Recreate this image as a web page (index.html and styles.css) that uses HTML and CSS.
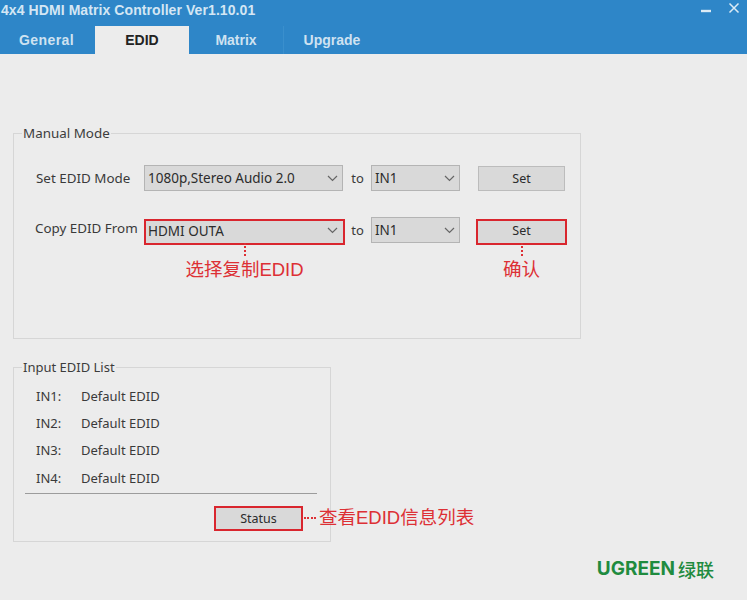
FILE: index.html
```html
<!DOCTYPE html>
<html lang="en">
<head>
<meta charset="utf-8">
<title>4x4 HDMI Matrix Controller</title>
<link rel="stylesheet" href="styles.css">
</head>
<body>
<div class="window">
  <header class="head">
    <div class="titlebar">
      <span class="title">4x4 HDMI Matrix Controller Ver1.10.01</span>
      <span class="winbtns">
        <svg class="win-min" width="10" height="12" viewBox="0 0 10 12"><path d="M0 9h10" stroke="#dcebf5" stroke-width="2.4"/></svg>
        <svg class="win-close" width="12" height="12" viewBox="0 0 12 12"><path d="M1.5 1.5l9 9M10.5 1.5l-9 9" stroke="#dcebf5" stroke-width="1.5"/></svg>
      </span>
    </div>
    <nav class="tabs">
      <span class="tab tab-general">General</span>
      <span class="tab tab-active">EDID</span>
      <span class="tab tab-matrix">Matrix</span>
      <span class="tab tab-upgrade">Upgrade</span>
    </nav>
  </header>
  <main class="content">
    <fieldset class="group group-manual">
      <legend>Manual Mode</legend>
      <div class="grid">
        <span class="label">Set EDID Mode</span>
        <div class="combo"><span>1080p,Stereo Audio 2.0</span><svg class="chev" width="11" height="7" viewBox="0 0 11 7"><path d="M1 1l4.5 4.5L10 1" fill="none" stroke="#666" stroke-width="1.2"/></svg></div>
        <span class="to">to</span>
        <div class="combo"><span>IN1</span><svg class="chev" width="11" height="7" viewBox="0 0 11 7"><path d="M1 1l4.5 4.5L10 1" fill="none" stroke="#666" stroke-width="1.2"/></svg></div>
        <span class="spacer"></span>
        <div class="btn btn-plain">Set</div>

        <span class="label label-up">Copy EDID From</span>
        <div class="combo marked marked-combo"><span>HDMI OUTA</span><svg class="chev" width="11" height="7" viewBox="0 0 11 7"><path d="M1 1l4.5 4.5L10 1" fill="none" stroke="#666" stroke-width="1.2"/></svg></div>
        <span class="to">to</span>
        <div class="combo"><span>IN1</span><svg class="chev" width="11" height="7" viewBox="0 0 11 7"><path d="M1 1l4.5 4.5L10 1" fill="none" stroke="#666" stroke-width="1.2"/></svg></div>
        <span class="spacer"></span>
        <div class="btn marked">Set</div>

        <span class="spacer"></span>
        <div class="note note-select"><i class="dots"></i><span>选择复制EDID</span></div>
        <span class="spacer"></span>
        <span class="spacer"></span>
        <span class="spacer"></span>
        <div class="note"><i class="dots"></i><span>确认</span></div>
      </div>
    </fieldset>
    <fieldset class="group group-list">
      <legend>Input EDID List</legend>
      <dl class="list">
        <div class="row"><dt>IN1:</dt><dd>Default EDID</dd></div>
        <div class="row"><dt>IN2:</dt><dd>Default EDID</dd></div>
        <div class="row"><dt>IN3:</dt><dd>Default EDID</dd></div>
        <div class="row"><dt>IN4:</dt><dd>Default EDID</dd></div>
      </dl>
      <hr class="rule">
      <div class="status-row">
        <div class="btn marked btn-status">Status
          <div class="callout"><i class="hdots"></i><span>查看EDID信息列表</span></div>
        </div>
      </div>
    </fieldset>
    <footer class="brand"><span class="brand-en">UGREEN</span><span class="brand-cn">绿联</span></footer>
  </main>
</div>
</body>
</html>
```
FILE: styles.css
```css
* { box-sizing: border-box; }
html, body { margin: 0; height: 100%; }
body {
  background: #ececec;
  font-family: "Noto Sans", "Noto Sans CJK SC", sans-serif;
  font-size: 13px;
  color: #3a3a3a;
}
.window { width: 747px; height: 600px; overflow: hidden; display: flex; flex-direction: column; }
.head { height: 54px; background: #2e86c8; display: flex; flex-direction: column; }
.titlebar { height: 26px; display: flex; justify-content: space-between; padding-left: 1px; }
.title {
  font-family: "Liberation Sans", sans-serif;
  font-weight: bold;
  font-size: 14px;
  letter-spacing: 0.08px;
  line-height: 20px;
  color: #d4e6f4;
  white-space: nowrap;
}
.winbtns { display: flex; padding: 2px 7px 0 0; gap: 17px; align-items: flex-start; }
.tabs { display: flex; height: 28px; }
.tab {
  font-family: "Liberation Sans", sans-serif;
  font-weight: bold;
  font-size: 14px;
  line-height: 29px;
  color: #cfe2f1;
  text-align: center;
}
.tab-general { width: 95px; padding-right: 2px; letter-spacing: 0.4px; }
.tab-active { width: 94px; background: #ececec; color: #222; }
.tab-matrix { width: 95px; border-right: 1px solid #3a8fcd; }
.tab-upgrade { width: 96px; }
.content { flex: 1; padding: 70px 0 0 13px; display: flex; flex-direction: column; }
.group { margin: 0; min-width: 0; border: 1px solid #d6d6d6; }
.group legend {
  padding: 0 1px;
  font-size: 13px;
  line-height: 18px;
  color: #3c3c3c;
}
.group-manual { width: 568px; height: 215px; padding: 23px 0 0 22px; }
.group-manual legend { margin-left: -14px; font-size: 13.4px; }
.group-list { width: 318px; height: 184px; margin-top: 19px; padding: 11px 13px 0 11px; }
.group-list legend { margin-left: -3px; }
.grid {
  display: grid;
  grid-template-columns: 108px 199px 28px 89px 18px 87px;
  grid-template-rows: 26px 26px auto;
  row-gap: 26px;
  align-items: center;
}
.label { white-space: nowrap; font-size: 13.4px; }
.label-up { padding-bottom: 4px; margin-left: -1px; }
.to { text-align: center; padding-left: 1px; }
.combo {
  height: 26px;
  background: #d9d9d9;
  border: 1px solid #b4b4b4;
  display: flex;
  align-items: center;
  justify-content: space-between;
  padding: 0 4px 0 3px;
  color: #2c2c2c;
  font-size: 13.5px;
}
.chev { flex: none; }
.btn {
  height: 25px;
  background: #d9d9d9;
  border: 1px solid #bcbcbc;
  display: flex;
  align-items: center;
  justify-content: center;
  color: #2c2c2c;
  font-size: 12.5px;
}
.marked {
  height: 22px;
  align-self: end;
  outline: 2px solid #d9262e;
  border-color: #d9d9d9;
  padding-bottom: 3px;
}
.marked-combo { margin-left: 2px; padding-left: 1px; }
.note {
  margin-top: -26px;
  display: flex;
  flex-direction: column;
  align-items: center;
  color: #dd3035;
  font-size: 18.5px;
  line-height: 24px;
  font-family: "Liberation Sans", "Noto Sans CJK SC", sans-serif;
  font-weight: 400;
}
.note-select { padding-left: 2px; }
.dots { display: block; height: 13px; border-left: 2px dotted #dd3035; margin-bottom: 2px; }
.list { margin: 0; padding-left: 11px; display: flex; flex-direction: column; gap: 8.2px; }
.row { display: flex; line-height: 19px; }
.row dt { width: 45px; }
.row dd { margin: 0; }
.rule { margin: 5px 0 0; border: 0; border-top: 1px solid #9c9c9c; height: 0; }
.status-row { display: flex; padding: 14px 0 0 191px; }
.btn-status { width: 85px; height: 21px; position: relative; padding-bottom: 0; }
.callout {
  position: absolute;
  left: 100%;
  top: -3px;
  margin-left: 4px;
  display: flex;
  align-items: center;
  gap: 3px;
  white-space: nowrap;
  color: #dd3035;
  font-size: 18.5px;
  line-height: 24px;
  font-family: "Liberation Sans", "Noto Sans CJK SC", sans-serif;
  font-weight: 400;
}
.hdots { display: block; width: 12px; border-top: 2px dotted #dd3035; }
.brand {
  display: flex;
  align-items: center;
  justify-content: flex-end;
  gap: 3px;
  padding-right: 33px;
  margin-top: 15px;
  color: #1f8b3f;
  line-height: 24px;
}
.brand-en { font-family: "Inter", sans-serif; font-weight: 700; font-size: 19px; }
.brand-cn { font-family: "Noto Sans CJK SC", sans-serif; font-weight: 500; font-size: 18px; }
```
